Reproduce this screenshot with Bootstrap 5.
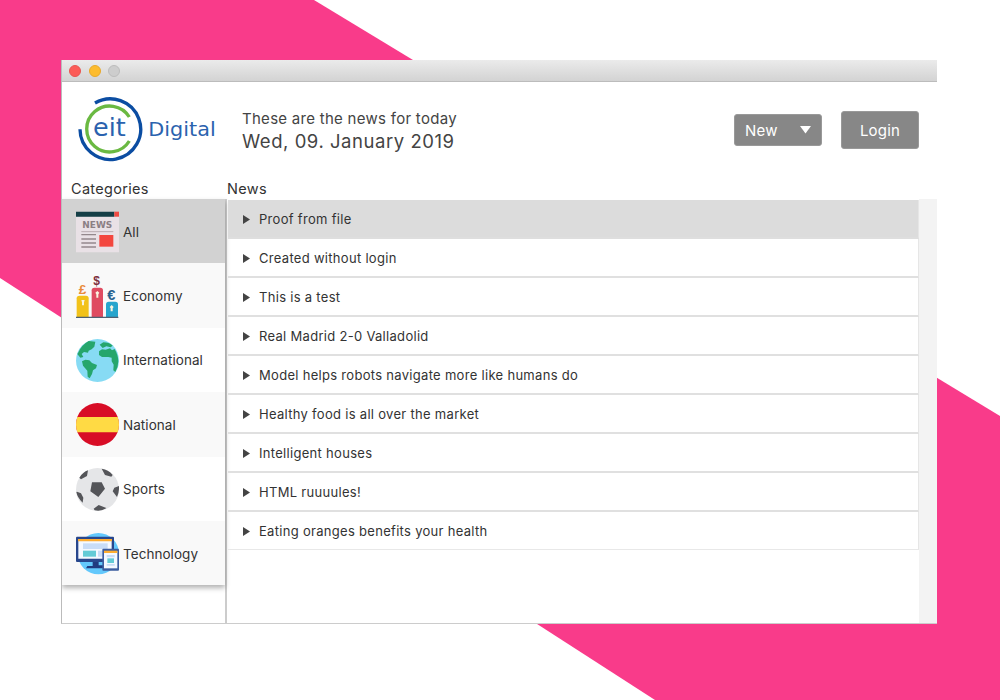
<!DOCTYPE html>
<html lang="en">
<head>
<meta charset="utf-8">
<meta name="viewport" content="width=device-width, initial-scale=1">
<title>EIT Digital News</title>
<link href="https://cdn.jsdelivr.net/npm/bootstrap@5.3.0/dist/css/bootstrap.min.css" rel="stylesheet">
<style>
body{font-family:Inter,"Liberation Sans",sans-serif;color:#444;height:700px;overflow:hidden;background:#fff;padding:60px 0 0 61px}
.backdrop{position:absolute;inset:0;z-index:-1}
.news-window{width:876px;height:564px;background:#fff;border-left:1px solid #bbb;border-bottom:1px solid #ccc;overflow:hidden}
.titlebar{height:22px;background:linear-gradient(#ebebeb,#d3d3d3);border-bottom:1px solid #bcbcbc;padding:1px 0 0 7px;gap:7.5px}
.dot{width:12px;height:12px;border-radius:50%;border:1px solid}
.dot-close{background:#fc5b57;border-color:#e85450}
.dot-min{background:#fdbc2e;border-color:#e8a92a}
.dot-max{background:#cdcdcd;border-color:#bcbcbc}
.app-header{height:98px;padding:0 18px 2px 15px}
.logo{margin-top:-3px}
.intro{margin:0 0 0 26px;width:240px}
.intro-top{font-size:15px;line-height:21px;letter-spacing:.28px}
.intro-date{font-size:18.5px;line-height:24px;letter-spacing:.54px}
.app-btn{--bs-btn-bg:#878787;--bs-btn-border-color:#999;--bs-btn-color:#fff;--bs-btn-hover-bg:#777;--bs-btn-hover-color:#fff;--bs-btn-border-radius:3px;--bs-btn-font-size:15px;--bs-btn-line-height:1;letter-spacing:.2px}
.btn-new{width:88px;height:32px;padding:0 10px}
.btn-login{width:78px;height:38px;padding:0}
.main-cols{height:443px}
.side{width:165px}
.side-body{height:424px;border-right:2px solid #ccc}
.pane-title{height:19px;line-height:18px;font-size:14.5px;letter-spacing:.3px;color:#333}
.side .pane-title{padding-left:9px}
.cats{box-shadow:0 3px 5px rgba(0,0,0,.3);width:163px}
.cat{height:64.4px;padding:1px 0 0 14px;gap:4px;font-size:13.5px;letter-spacing:.05px;background:#fff;color:#333}
.cat:nth-child(even){background:#f9f9f9}
.cat:first-child{background:#d2d2d2}
.cat svg{width:43px;height:43px;flex:none}
.feed{width:692px}
.feed-list{padding:1px 0 0 1px}
.story{height:39px;padding:2px 0 0 15px;gap:9px;font-size:13px;letter-spacing:.3px;border-bottom:2px solid #e0e0e0;border-right:1px solid #e6e6e6;color:#333}
.story:first-child{background:#dcdcdc;border-bottom-color:#dedede}
.story:last-child{height:38px;border-bottom:1px solid #e8e8e8}
.track{background:#f3f3f3;margin-top:19px}
</style>
<script src="https://cdn.jsdelivr.net/npm/bootstrap@5.3.0/dist/js/bootstrap.bundle.min.js" defer></script>
</head>
<body>
<svg class="backdrop" width="1000" height="700"><path d="M0 0H314L1000 416V700H655L0 278Z" fill="#f93b8a"/></svg>
<div class="news-window d-flex flex-column">
  <div class="titlebar d-flex align-items-center"><span class="dot dot-close"></span><span class="dot dot-min"></span><span class="dot dot-max"></span></div>
  <header class="app-header d-flex align-items-center">
    <svg class="logo flex-shrink-0" width="139" height="66" viewBox="64 126 417 198" fill="none">
      <path d="M118 147A91 91 0 1 1 73 226" stroke="#0b4da2" stroke-width="10"/>
      <path d="M221 189A69 69 0 1 0 221 261" stroke="#6ab942" stroke-width="10"/>
      <g fill="#2a62ae" font-family="'DejaVu Sans',sans-serif">
        <text x="112" y="247" font-size="72" textLength="98" lengthAdjust="spacingAndGlyphs">eit</text>
        <text x="278" y="247" font-size="60" textLength="202" lengthAdjust="spacingAndGlyphs">Digital</text>
      </g>
    </svg>
    <div class="intro"><div class="intro-top text-nowrap">These are the news for today</div><div class="intro-date text-nowrap">Wed, 09. January 2019</div></div>
    <div class="d-flex align-items-center ms-auto" style="gap:19px">
      <button class="btn app-btn btn-new d-flex align-items-center justify-content-between">New <svg width="11" height="8"><path d="M0 0H11L5.5 7.5Z" fill="#fff"/></svg></button>
      <button class="btn app-btn btn-login">Login</button>
    </div>
  </header>
  <div class="main-cols d-flex">
    <nav class="side flex-shrink-0">
      <div class="pane-title">Categories</div>
      <div class="side-body"><div class="cats">
        <div class="cat d-flex align-items-center">
          <svg viewBox="0 0 129 129"><path d="M0 20H129V127H0Z" fill="#e9e1e6"/><path d="M0 5H115V20H0Z" fill="#153f47"/><path d="M115 5H129V20H115Z" fill="#f04a42"/><text x="19" y="54" font-size="26" font-weight="700" fill="#8b7f84" font-family="DejaVu Sans" textLength="90" lengthAdjust="spacingAndGlyphs">NEWS</text><path d="M16 65H112" stroke="#b9adb2" stroke-width="3"/><path d="M16 74H60M16 87H60M16 99H60M16 111H60" stroke="#94888d" stroke-width="4"/><path d="M70 75H112V110H70Z" fill="#f3463f"/></svg>
          <span>All</span></div>
        <div class="cat d-flex align-items-center">
          <svg viewBox="0 0 129 129"><path d="M2 126V70Q2 62 10 62H30Q38 62 38 70V126Z" fill="#f2c21a"/><path d="M47 126V46Q47 38 55 38H73Q81 38 81 46V126Z" fill="#df4b60"/><path d="M90 126V88Q90 80 98 80H118Q126 80 126 88V126Z" fill="#27a5cd"/><path d="M0 127H127" stroke="#4e6072" stroke-width="4"/><path d="M16 75H26L24 82V91H18V82ZM58 53L64 48L70 53L67 58V68H61V58ZM101 96L107 90L113 96L110 100V109H104V100Z" fill="#f8f4df"/><g font-family="Liberation Sans" font-weight="bold"><text x="8" y="57" font-size="41" fill="#e98b3b">£</text><text x="52" y="29" font-size="36" fill="#7e303e">$</text><text x="94" y="75" font-size="44" fill="#27608d">€</text></g></svg>
          <span>Economy</span></div>
        <div class="cat d-flex align-items-center">
          <svg viewBox="0 0 129 129"><circle cx="64.500" cy="64.500" r="64.500" fill="#87dbf4"/><path d="M6 42Q16 18 38 6L58 8L55 23L47 31L38 35L36 41L24 39L17 45L22 54L13 56L4 45ZM18 67L28 62L40 64L48 72L63 78L60 88L51 94L48 105L41 118L35 113L34 95L21 80ZM71 17L82 10Q99 10 110 20L104 25L91 22L80 27ZM69 37L78 31L89 32L102 28L108 34L116 30Q137 66 118 99L112 94L113 77L107 67V56L97 54H78L69 48Z" fill="#26a66c"/></svg>
          <span>International</span></div>
        <div class="cat d-flex align-items-center">
          <svg viewBox="0 0 129 129"><circle cx="64.500" cy="64.500" r="64.500" fill="#d80d26"/><path d="M4 42H125Q133 65 125 88H4Q-4 65 4 42Z" fill="#ffda44"/></svg>
          <span>National</span></div>
        <div class="cat d-flex align-items-center">
          <svg viewBox="0 0 129 129"><circle cx="64.500" cy="64.500" r="64.500" fill="#e5e6e8"/><path d="M48 43L77 43L87 62L67 87L43 70ZM10 29Q21 12 36 7L33 24L15 34ZM77 2Q97 4 110 21L106 26L87 21ZM129 54Q130 72 123 87L110 70L115 59ZM3 71L15 76L22 89L20 104Q4 89 1 72ZM53 122L68 111L91 120Q74 132 56 127Z" fill="#545559"/></svg>
          <span>Sports</span></div>
        <div class="cat d-flex align-items-center">
          <svg viewBox="0 0 129 129"><circle cx="67" cy="65" r="62" fill="#63c8fc"/><path d="M50 83H68V100H84V109H30L34 102H50Z" fill="#203b80"/><rect y="14" width="114" height="76" rx="3" fill="#28478d"/><path d="M7 21H107V80H7Z" fill="#f5f9ff"/><path d="M6 21H108V28H6Z" fill="#ffae31"/><path d="M21 34H95V51H21Z" fill="#c9ddf7"/><path d="M21 56H60V74H21Z" fill="#64cbd6"/><path d="M66 56H80V74H66Z" fill="#c9ddf7"/><rect x="79" y="50" width="50" height="66" rx="3" fill="#3d5d9f"/><path d="M84 57H124V109H84Z" fill="#f5f9ff"/><path d="M84 56H124V63H84Z" fill="#ffae31"/><path d="M92 69H116V76H92ZM92 96H116V101H92Z" fill="#c9ddf7"/><path d="M94 79H114V93H94Z" fill="#64cbd6"/></svg>
          <span>Technology</span></div>
      </div></div>
    </nav>
    <main class="feed flex-shrink-0">
      <div class="pane-title">News</div>
      <div class="feed-list">
        <div class="story d-flex align-items-center"><svg width="7" height="9"><path d="M0 0L7 4.500L0 9Z" fill="#444"/></svg><span>Proof from file</span></div>
        <div class="story d-flex align-items-center"><svg width="7" height="9"><path d="M0 0L7 4.500L0 9Z" fill="#444"/></svg><span>Created without login</span></div>
        <div class="story d-flex align-items-center"><svg width="7" height="9"><path d="M0 0L7 4.500L0 9Z" fill="#444"/></svg><span>This is a test</span></div>
        <div class="story d-flex align-items-center"><svg width="7" height="9"><path d="M0 0L7 4.500L0 9Z" fill="#444"/></svg><span>Real Madrid 2-0 Valladolid</span></div>
        <div class="story d-flex align-items-center"><svg width="7" height="9"><path d="M0 0L7 4.500L0 9Z" fill="#444"/></svg><span>Model helps robots navigate more like humans do</span></div>
        <div class="story d-flex align-items-center"><svg width="7" height="9"><path d="M0 0L7 4.500L0 9Z" fill="#444"/></svg><span>Healthy food is all over the market</span></div>
        <div class="story d-flex align-items-center"><svg width="7" height="9"><path d="M0 0L7 4.500L0 9Z" fill="#444"/></svg><span>Intelligent houses</span></div>
        <div class="story d-flex align-items-center"><svg width="7" height="9"><path d="M0 0L7 4.500L0 9Z" fill="#444"/></svg><span>HTML ruuuules!</span></div>
        <div class="story d-flex align-items-center"><svg width="7" height="9"><path d="M0 0L7 4.500L0 9Z" fill="#444"/></svg><span>Eating oranges benefits your health</span></div>
      </div>
    </main>
    <div class="track flex-grow-1"></div>
  </div>
</div>
</body>
</html>
